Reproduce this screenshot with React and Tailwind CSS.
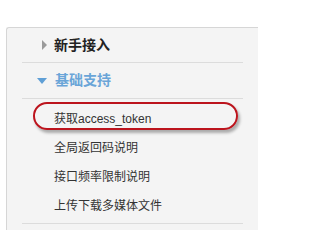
export default function App() {
  const items = ["获取access_token", "全局返回码说明", "接口频率限制说明", "上传下载多媒体文件"];

  return (
    <div
      className="w-[258px] h-[230px] bg-white pt-[27px] pl-[6px] overflow-hidden"
      style={{ fontFamily: '"Liberation Sans", "Noto Sans CJK SC", sans-serif' }}
    >
      <div className="h-full bg-[#f4f4f4] border-l border-t border-[#d6d6d6] rounded-tl-[3px] px-[15px]">
        {/* 新手接入 */}
        <div className="h-[35px] flex items-center pl-[20px] gap-[7px] border-b border-[#dcdcdc]">
          <span className="w-0 h-0 border-y-[5px] border-y-transparent border-l-[5px] border-l-[#9a9a9a]" />
          <span className="text-[14px] font-bold text-[#222]">新手接入</span>
        </div>

        {/* 基础支持 */}
        <div className="h-[36px] flex items-center pl-[15px] gap-[8px] border-b border-[#dcdcdc]">
          <span className="w-0 h-0 border-x-[5px] border-x-transparent border-t-[6px] border-t-[#5f9fd6] mt-[1px]" />
          <span className="text-[14px] font-bold text-[#6aa5d8]">基础支持</span>
        </div>

        <div className="pt-[5px] pb-[3px] border-b border-[#dcdcdc]">
          {items.map((item, i) => (
            <div key={item} className="relative h-[29px] flex items-center pl-[32px] text-[12px] text-[#333]">
              {item}
              {i === 0 && (
                <div className="absolute left-[11px] right-[5px] top-[-2px] h-[28px] rounded-full border-2 border-[#bc141d] shadow-[2px_3px_3px_rgba(0,0,0,0.3)]" />
              )}
            </div>
          ))}
        </div>
      </div>
    </div>
  );
}
